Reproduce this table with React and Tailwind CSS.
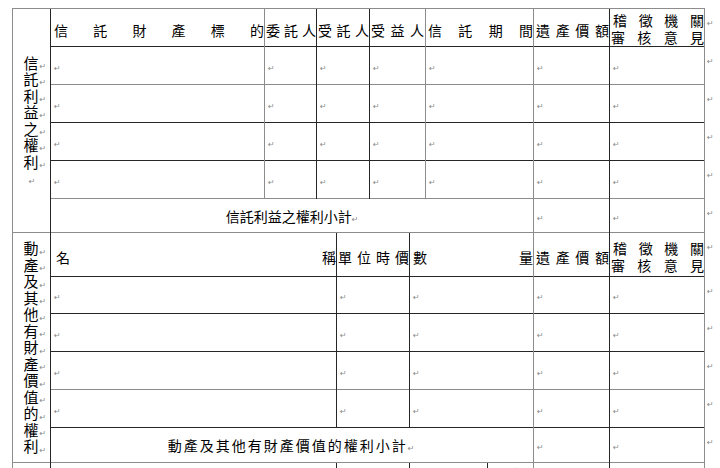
import React from "react";

// left / top line colours, written out in full
const LC = { G: "border-l-[#8c8c8c]", D: "border-l-[#262626]" };
const TC = { G: "border-t-[#8c8c8c]", D: "border-t-[#262626]" };

const WIDTHS = [38, 214, 52, 20, 33, 40, 16, 62, 46, 76, 95, 16];

function Mark() {
  return (
    <span className="font-['DejaVu_Sans',sans-serif] text-[8px] leading-none text-[#8a8a8a]">
      ↵
    </span>
  );
}

function Td({ l, t, className = "", children, ...rest }) {
  return (
    <td {...rest} className={`border-l border-t p-0 ${LC[l]} ${TC[t]} ${className}`}>
      {children}
    </td>
  );
}

// Empty data cell: just the paragraph mark
function E({ l, t, span = 1 }) {
  return (
    <Td l={l} t={t} colSpan={span} className="pl-[3px] align-middle leading-[12px]">
      <Mark />
    </Td>
  );
}

// Row end mark outside the table
function End() {
  return (
    <td className="border-l border-l-[#8c8c8c] p-0 pl-[2px] align-top leading-[12px]">
      <div className="pt-[5px]">
        <Mark />
      </div>
    </td>
  );
}

function Spread({ text, className = "" }) {
  return (
    <div className={`flex justify-between ${className}`}>
      {text.split("").map((c, i) => (
        <span key={i}>{c}</span>
      ))}
    </div>
  );
}

function Review({ t, className = "" }) {
  return (
    <Td l="D" t={t} className={`align-middle ${className}`}>
      <div className="text-[14px] leading-[17px]">
        <Spread text="稽徵機關" className="pl-[3px]" />
        <Spread text="審核意見" className="pl-[1px]" />
      </div>
    </Td>
  );
}

function Label({ text, rows, trailing }) {
  return (
    <Td l="G" t="G" rowSpan={rows} className="align-middle">
      <div className="flex flex-col items-center text-[15px] leading-[16.5px]">
        {text.split("").map((c, i) => (
          <div key={i} className="flex h-[16.5px] items-center pl-[6px]">
            <span>{c}</span>
            <span className="ml-[1px] w-[6px] leading-none">
              <Mark />
            </span>
          </div>
        ))}
        {trailing && (
          <div className="h-[16.5px] pl-[1px] leading-[16.5px]">
            <Mark />
          </div>
        )}
      </div>
    </Td>
  );
}

export default function App() {
  const trustRows = [
    { t: "D", h: "h-[38px]" },
    { t: "G", h: "h-[38px]" },
    { t: "D", h: "h-[38px]" },
    { t: "D", h: "h-[38px]" },
  ];
  const goodsRows = [
    { t: "D", h: "h-[37px]" },
    { t: "D", h: "h-[38px]" },
    { t: "D", h: "h-[38px]" },
    { t: "G", h: "h-[38px]" },
  ];

  return (
    <div className="h-[468px] w-[720px] overflow-hidden bg-white pt-[8px] font-['Noto_Sans_CJK_TC','Noto_Sans_CJK_JP',sans-serif] text-black">
      <table className="ml-[12px] w-[708px] table-fixed border-collapse">
        <colgroup>
          {WIDTHS.map((w, i) => (
            <col key={i} style={{ width: w }} />
          ))}
        </colgroup>
        <tbody className="text-[14px] leading-[18px]">
          {/* 信託利益之權利 */}
          <tr className="h-[38px]">
            <Label text="信託利益之權利" rows={6} trailing />
            <Td l="D" t="G" className="pt-[4px] align-middle">
              <Spread text="信託財產標的" className="pl-[3px]" />
            </Td>
            <Td l="G" t="G" className="pt-[4px] align-middle">
              <Spread text="委託人" className="pl-[1px]" />
            </Td>
            <Td l="D" t="G" colSpan={2} className="pt-[4px] align-middle">
              <Spread text="受託人" className="pl-[1px]" />
            </Td>
            <Td l="D" t="G" colSpan={2} className="pt-[4px] align-middle">
              <Spread text="受益人" className="px-[1px]" />
            </Td>
            <Td l="G" t="G" colSpan={2} className="pt-[4px] align-middle">
              <Spread text="信託期間" className="pl-[2px]" />
            </Td>
            <Td l="G" t="G" className="pt-[4px] align-middle">
              <Spread text="遺產價額" className="pl-[2px]" />
            </Td>
            <Review t="G" className="pt-[2px]" />
            <End />
          </tr>
          {trustRows.map((r, i) => (
            <tr key={i} className={r.h}>
              <E l="D" t={r.t} />
              <E l="G" t={r.t} />
              <E l="D" t={r.t} span={2} />
              <E l="D" t={r.t} span={2} />
              <E l="G" t={r.t} span={2} />
              <E l="G" t={r.t} />
              <E l="D" t={r.t} />
              <End />
            </tr>
          ))}
          <tr className="h-[34px]">
            <Td l="D" t="G" colSpan={8} className="text-center align-middle">
              信託利益之權利小計
              <Mark />
            </Td>
            <E l="G" t="G" />
            <E l="D" t="G" />
            <End />
          </tr>

          {/* 動產及其他有財產價值的權利 */}
          <tr className="h-[44px]">
            <Label text="動產及其他有財產價值的權利" rows={6} />
            <Td l="D" t="G" colSpan={3} className="pt-[4px] align-middle">
              <Spread text="名稱" className="pl-[5px]" />
            </Td>
            <Td l="D" t="G" colSpan={2} className="pt-[4px] align-middle">
              <Spread text="單位時價" className="pl-[1px]" />
            </Td>
            <Td l="D" t="G" colSpan={3} className="pt-[4px] align-middle">
              <Spread text="數量" className="pl-[3px]" />
            </Td>
            <Td l="G" t="G" className="pt-[4px] align-middle">
              <Spread text="遺產價額" className="pl-[2px]" />
            </Td>
            <Review t="G" className="pt-[4px]" />
            <End />
          </tr>
          {goodsRows.map((r, i) => (
            <tr key={i} className={r.h}>
              <E l="D" t={r.t} span={3} />
              <E l="D" t={r.t} span={2} />
              <E l="D" t={r.t} span={3} />
              <E l="G" t={r.t} />
              <E l="D" t={r.t} />
              <End />
            </tr>
          ))}
          <tr className="h-[35px]">
            <Td l="D" t="D" colSpan={8} className="text-center align-middle tracking-[2px]">
              動產及其他有財產價值的權利小計
              <Mark />
            </Td>
            <E l="G" t="D" />
            <E l="D" t="D" />
            <End />
          </tr>

          {/* next section, cut by the page edge */}
          <tr className="h-[38px]">
            <Td l="G" t="G" />
            <Td l="D" t="G" colSpan={3} />
            <Td l="D" t="G" colSpan={2} />
            <Td l="D" t="G" colSpan={2} />
            <Td l="D" t="G" className="pt-[2px] align-top">
              <Spread text="單價" className="px-[6px]" />
            </Td>
            <Td l="G" t="G" />
            <Td l="D" t="G" />
            <End />
          </tr>
        </tbody>
      </table>
    </div>
  );
}
